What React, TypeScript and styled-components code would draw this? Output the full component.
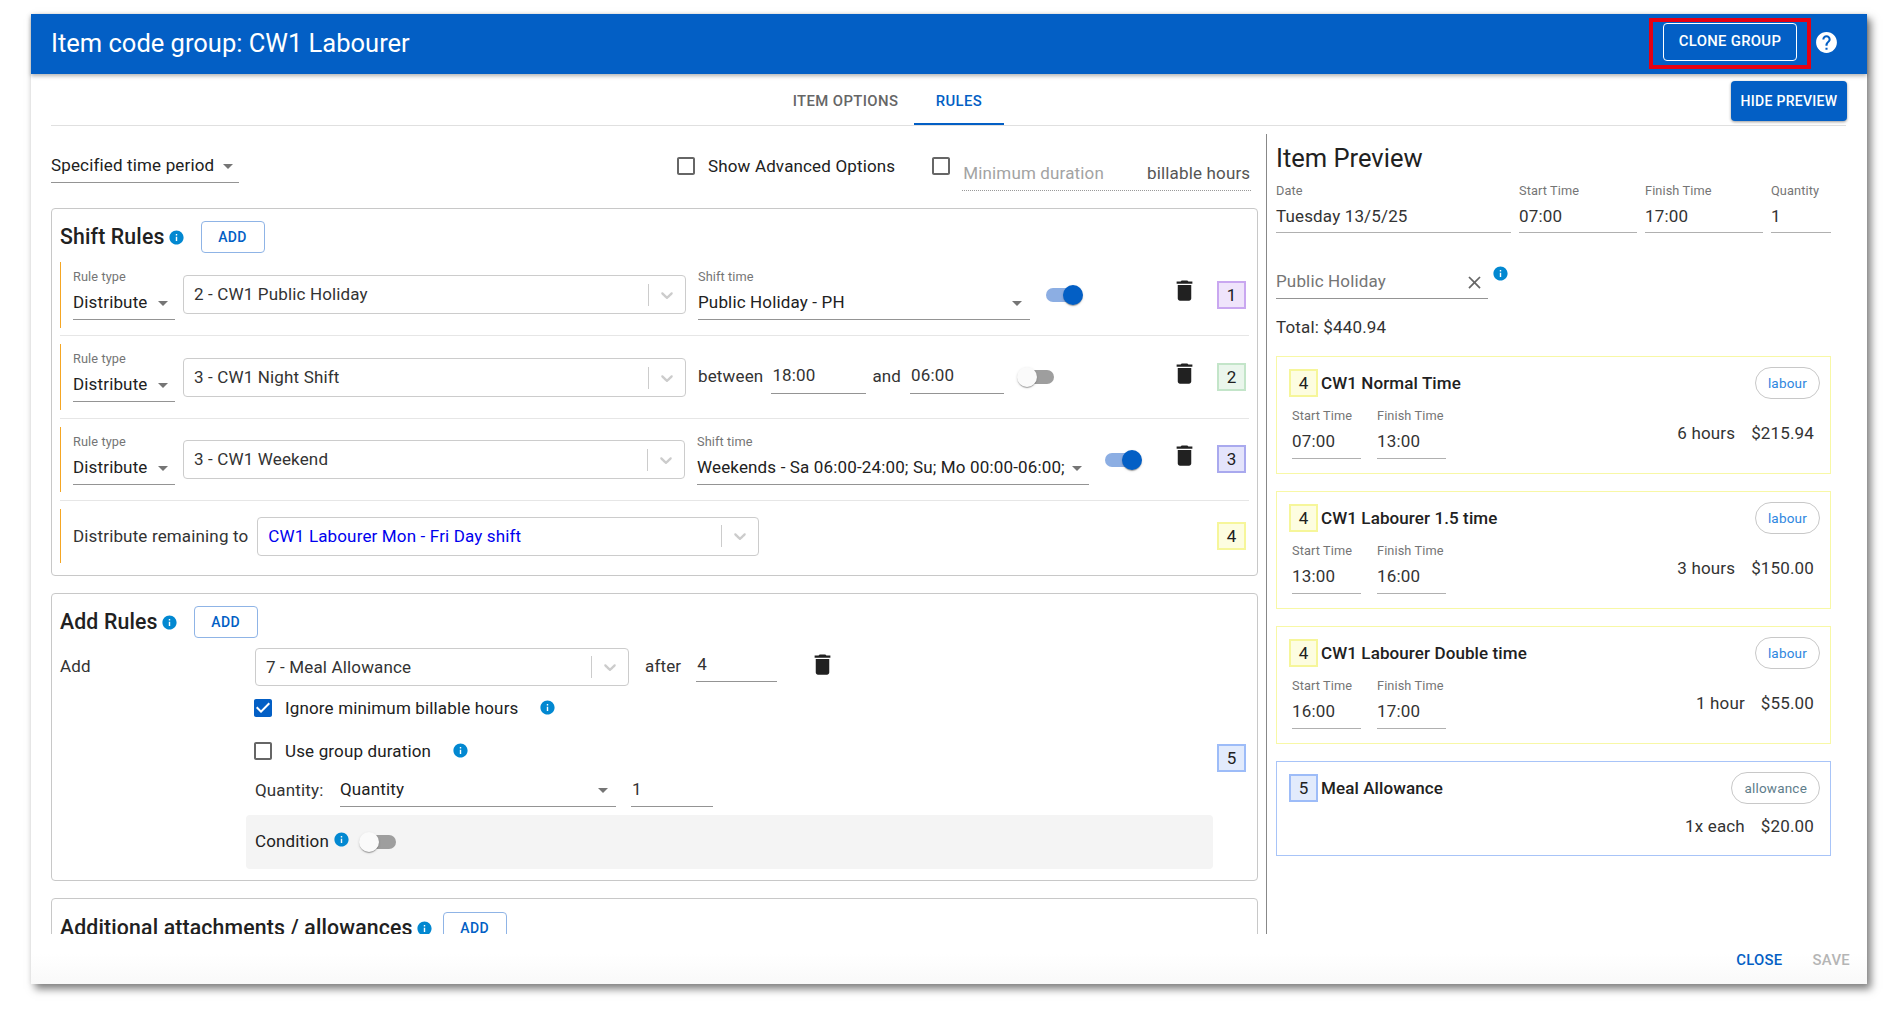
import React from "react";
import styled, { createGlobalStyle } from "styled-components";

const Global = createGlobalStyle`
  html, body { margin: 0; padding: 0; background: #fff; }
  body { font-family: Roboto, "Liberation Sans", sans-serif; color: #212121; font-size: 17px; letter-spacing: .15px; overflow: hidden; }
  * { box-sizing: border-box; }
`;

const BLUE = "#035fc5";

const Spacer = styled.span`
  flex: 1;
`;
const CaretWrap = styled.span`
  display: flex; margin-right: 1px;
`;
const Page = styled.div`
  width: 1902px; height: 1014px; padding: 14px 0 0 31px;
`;
const Dialog = styled.div`
  width: 1836px; height: 970px; background: #fff; display: flex; flex-direction: column;
  box-shadow: 4px 5px 8px rgba(0,0,0,.5), -2px 0 5px rgba(0,0,0,.04);
`;
const Header = styled.header`
  height: 60px; flex: none; background: ${BLUE}; color: #fff; display: flex; align-items: center;
  padding: 0 28px 0 20px; box-shadow: 0 2px 4px rgba(0,0,0,.3); position: relative;
`;
const Title = styled.h1`
  margin: -2px 0 0; font-size: 25.5px; font-weight: 400; line-height: 32px; letter-spacing: 0; flex: 1;
`;
const Annotation = styled.div`
  width: 162px; height: 51px; border: 4px solid #e60012; display: flex; align-items: center; margin-bottom: 2px; padding: 0 0 3px 10px;
`;
const CloneButton = styled.button`
  width: 134px; height: 38px; background: transparent; border: 1px solid #fff; border-radius: 4px; color: #fff;
  font: 500 14.875px Roboto, sans-serif; letter-spacing: .3px; text-transform: uppercase; padding: 0 0 2px;
`;
const HelpIcon = styled.svg`
  width: 25px; height: 25px; fill: #fff; margin: 0 0 3px 3px; display: block;
`;
const TabBar = styled.div`
  height: 52px; flex: none; margin: 0 21px 0 20px; border-bottom: 1px solid #e0e0e0; display: flex; align-items: flex-start; padding-left: 718px;
`;
const Tab = styled.div<{ $active?: boolean; $w: number; $pl?: number }>`
  width: ${p => p.$w}px; height: 51px; display: flex; align-items: center; justify-content: center; padding: 5px 0 0 ${p => p.$pl ?? 0}px;
  font-size: 14.875px; font-weight: 500; letter-spacing: .4px; text-transform: uppercase; white-space: nowrap;
  color: ${p => (p.$active ? BLUE : "#666")};
  border-bottom: 2px solid ${p => (p.$active ? BLUE : "transparent")};
`;
const HidePreview = styled.button`
  margin: 7px -1px 0 auto; width: 116px; height: 40px; border: 0; border-radius: 4px; background: ${BLUE}; color: #fff;
  font: 500 14px Roboto, sans-serif; letter-spacing: .3px; text-transform: uppercase; padding: 0;
  box-shadow: 0 1px 3px rgba(0,0,0,.4);
`;
const Main = styled.div`
  height: 800px; flex: none; margin: 8px 0 0 20px; display: flex; overflow: hidden;
`;
const LeftCol = styled.div`
  width: 1216px; flex: none; height: 800px; border-right: 1px solid #888; overflow: hidden; padding-right: 8px;
`;
const TopBar = styled.div`
  height: 74px; display: flex; align-items: flex-start;
`;
const UnderSelect = styled.div<{ $w: number; $mt?: number; $h?: number; $pb?: number }>`
  width: ${p => p.$w}px; height: ${p => p.$h ?? 35}px; margin-top: ${p => p.$mt ?? 0}px; border-bottom: 1px solid #949494;
  padding-bottom: ${p => p.$pb ?? 0}px;
  display: flex; align-items: center; justify-content: space-between; flex: none; white-space: nowrap;
`;
const Caret = styled.svg`
  width: 24px; height: 24px; fill: #757575; flex: none; margin-top: 2px;
`;
const SelectText = styled.span`
  margin-right: 2px;
`;
const CheckLabel = styled.label<{ $ml?: number; $mt?: number }>`
  display: flex; align-items: center; white-space: nowrap; margin-left: ${p => p.$ml ?? 0}px; margin-top: ${p => p.$mt ?? 0}px; height: 24px;
`;
const BoxIcon = styled.svg<{ $on?: boolean }>`
  width: 24px; height: 24px; margin: 0 10px 0 -3px; fill: ${p => (p.$on ? BLUE : "#666")}; flex: none;
`;
const MinField = styled.div`
  width: 289px; height: 35px; margin-left: -1px; margin-top: 22px; border-bottom: 1px dotted #999;
  display: flex; justify-content: space-between; align-items: center; padding-right: 1px;
`;
const Muted = styled.span`
  color: #a3a3a3; margin-left: 1px;
`;
const Plain = styled.span`
  color: #555; white-space: nowrap;
`;
const Card = styled.section<{ $pt?: number; $pb?: number; $mb?: number }>`
  border: 1px solid #c8c8c8; border-radius: 4px; padding: ${p => p.$pt ?? 12}px 8px ${p => p.$pb ?? 0}px 8px;
  margin-bottom: ${p => p.$mb ?? 17}px;
`;
const CardHead = styled.div`
  display: flex; align-items: center; height: 32px;
`;
const CardTitle = styled.h2`
  margin: 0; font-size: 21.25px; font-weight: 500; line-height: 32px; letter-spacing: .15px; white-space: nowrap; color: #212121;
`;
const Info = styled.svg<{ $ml?: number; $mt?: number }>`
  width: 17px; height: 17px; fill: #0288d1; flex: none; margin-left: ${p => p.$ml ?? 2}px; margin-top: ${p => p.$mt ?? 0}px;
`;
const AddButton = styled.button<{ $ml?: number }>`
  width: 64px; height: 32px; margin-left: ${p => p.$ml ?? 16}px; background: #fff; border: 1px solid #8fb4e6; border-radius: 4px; color: ${BLUE};
  font: 500 14px Roboto, sans-serif; letter-spacing: .4px; padding: 0;
`;
const RuleList = styled.div`
  margin-top: 9px; padding-right: 0;
`;
const RuleSep = styled.div<{ $last?: boolean; $gap?: number }>`
  padding-bottom: ${p => (p.$last ? 12 : p.$gap ?? 7)}px;
  border-bottom: ${p => (p.$last ? "none" : "1px solid #e6e6e6")};
  margin-bottom: ${p => (p.$last ? 0 : 8)}px;
`;
const RuleRow = styled.div<{ $h: number; $center?: boolean }>`
  height: ${p => p.$h}px; border-left: 1px solid #f5a623; padding: 0 3px 0 12px; display: flex;
  align-items: ${p => (p.$center ? "center" : "flex-start")}; gap: 0;
`;
const FieldCol = styled.div<{ $w: number; $ml?: number }>`
  width: ${p => p.$w}px; flex: none; padding-top: 7px; margin-left: ${p => p.$ml ?? 0}px; white-space: nowrap;
`;
const SmallLabel = styled.div`
  font-size: 12.75px; line-height: 16px; color: #757575; letter-spacing: .1px; white-space: nowrap;
`;
const ComboBox = styled.div<{ $w: number; $ml?: number; $mt?: number }>`
  width: ${p => p.$w}px; height: 39px; flex: none; margin-left: ${p => p.$ml ?? 0}px; margin-top: ${p => p.$mt ?? 0}px;
  border: 1px solid #ccc; border-radius: 4px; display: flex; align-items: center; padding: 0 0 0 10px; background: #fff;
`;
const ComboText = styled.span<{ $link?: boolean }>`
  flex: 1; color: ${p => (p.$link ? "#0000ee" : "#333")}; white-space: nowrap; margin-top: -1px;
`;
const ComboSep = styled.span`
  width: 1px; height: 22px; background: #ccc; flex: none;
`;
const Chevron = styled.svg`
  width: 20px; height: 20px; fill: #ccc; margin: 0 8px; flex: none;
`;
const Between = styled.span<{ $ml: number }>`
  margin-left: ${p => p.$ml}px; margin-top: 14px; height: 36px; display: flex; align-items: center; white-space: nowrap; color: #333; flex: none;
`;
const LineInput = styled.div<{ $w: number; $ml: number }>`
  width: ${p => p.$w}px; margin-left: ${p => p.$ml}px; margin-top: 14px; height: 36px; border-bottom: 1px solid #949494; flex: none;
  display: flex; align-items: center; color: #333; padding-left: 1px; padding-bottom: 2px;
`;
const Switch = styled.div<{ $on?: boolean; $mt?: number; $ml?: number }>`
  width: 34px; height: 14px; border-radius: 7px; flex: none; position: relative; margin-left: ${p => p.$ml ?? 16}px; margin-top: ${p => p.$mt ?? 26}px;
  background: ${p => (p.$on ? "#8caee3" : "#9e9e9e")};
  &::after {
    content: ""; position: absolute; width: 20px; height: 20px; border-radius: 50%; top: -3px;
    left: ${p => (p.$on ? "17px" : "-3px")};
    background: ${p => (p.$on ? BLUE : "#fafafa")};
    box-shadow: 0 2px 1px -1px rgba(0,0,0,.2), 0 1px 1px rgba(0,0,0,.14), 0 1px 3px rgba(0,0,0,.12);
  }
`;
const Trash = styled.svg<{ $auto?: boolean; $mt?: number; $ml?: number }>`
  width: 27px; height: 27px; fill: #212121; flex: none; margin-top: ${p => p.$mt ?? 15}px;
  margin-left: ${p => (p.$auto ? "auto" : `${p.$ml ?? 0}px`)};
`;
const NUM: Record<number, [string, string]> = {
  1: ["#efe4fb", "#c9a7f0"], 2: ["#eaf6ec", "#c3e5c9"], 3: ["#e4e4fb", "#a9a9ee"], 4: ["#fdfde0", "#f6f69a"], 5: ["#e2ebfc", "#9dbcf8"],
};
const Num = styled.div<{ $n: number; $ml?: number; $mt?: number; $auto?: boolean }>`
  width: 29px; height: 28px; flex: none; display: flex; align-items: center; justify-content: center; font-size: 17px; color: #212121;
  background: ${p => NUM[p.$n][0]}; border: 2px solid ${p => NUM[p.$n][1]};
  margin-left: ${p => (p.$auto ? "auto" : `${p.$ml ?? 0}px`)}; margin-top: ${p => p.$mt ?? 0}px;
`;
const AddBody = styled.div`
  display: flex; align-items: center; margin-top: 10px; padding-right: 3px;
`;
const AddLabel = styled.div`
  width: 195px; flex: none; align-self: flex-start; line-height: 38px; margin-top: -1px; color: #333;
`;
const AddFields = styled.div`
  width: 950px; flex: none; display: flex; flex-direction: column;
`;
const AddRow = styled.div<{ $h: number; $mt?: number }>`
  display: flex; align-items: flex-start; height: ${p => p.$h}px; margin-top: ${p => p.$mt ?? 0}px; white-space: nowrap;
`;
const AddCombo = styled(ComboBox)`
  height: 38px;
`;
const RowText = styled.span<{ $ml?: number; $w?: number; $lh?: number }>`
  margin-left: ${p => p.$ml ?? 0}px; ${p => (p.$w ? `width:${p.$w}px;` : "")} line-height: ${p => p.$lh ?? 36}px; color: #333; flex: none;
`;
const SmallLine = styled.div<{ $w: number; $ml: number }>`
  width: ${p => p.$w}px; margin-left: ${p => p.$ml}px; height: 34px; border-bottom: 1px solid #949494; flex: none; line-height: 32px; padding-left: 1px; color: #333;
`;
const CheckRow = styled.div<{ $mt: number }>`
  display: flex; align-items: center; height: 19px; margin-top: ${p => p.$mt}px; margin-left: -1px; white-space: nowrap;
`;
const Condition = styled.div`
  margin: 8px 0 0 -9px; width: 967px; height: 54px; background: #f4f4f4; border-radius: 4px; display: flex; align-items: center; padding: 0 0 2px 9px;
`;
const RightCol = styled.div`
  flex: 1; padding-left: 9px; padding-top: 8px; width: 600px;
`;
const PreviewTitle = styled.h2`
  margin: 0; font-size: 25.5px; font-weight: 400; line-height: 32px; color: #212121; letter-spacing: 0;
`;
const PreviewFields = styled.div`
  display: grid; grid-template-columns: 235px 118px 118px 60px; column-gap: 8px; margin-top: 9px;
`;
const Field = styled.div``;
const FieldValue = styled.div`
  height: 34px; border-bottom: 1px solid #b0b0b0; line-height: 34px; color: #333; white-space: nowrap;
`;
const HolidayRow = styled.div`
  display: flex; align-items: flex-start; margin-top: 32px;
`;
const HolidayField = styled.div`
  width: 212px; height: 34px; border-bottom: 1px solid #949494; display: flex; align-items: center; justify-content: space-between; color: #757575; padding-bottom: 2px;
`;
const CloseX = styled.svg`
  width: 21px; height: 21px; fill: #666; margin-right: 3px; margin-top: 3px;
`;
const Total = styled.div`
  line-height: 24px; margin-top: 16px; color: #333;
`;
const Cards = styled.div`
  display: flex; flex-direction: column; gap: 17px; margin-top: 17px; width: 555px;
`;
const ItemCard = styled.div<{ $c: string; $h: number }>`
  height: ${p => p.$h}px; border: 1px solid ${p => p.$c}; padding: 12px 10px 0 12px;
`;
const ItemHead = styled.div`
  display: flex; align-items: center; height: 28px;
`;
const ItemTitle = styled.span`
  font-weight: 500; margin-left: 3px; white-space: nowrap; font-size: 17px; letter-spacing: .1px; margin-top: -1px;
`;
const Chip = styled.span<{ $c: string }>`
  margin-left: auto; height: 32px; border: 1px solid #c8c8c8; border-radius: 16px; padding: 0 12px; display: flex; align-items: center;
  font-size: 13.5px; color: ${p => p.$c}; letter-spacing: .2px;
`;
const TimesRow = styled.div`
  display: flex; align-items: center; margin-top: 11px; padding: 0 6px 0 3px;
`;
const TimeField = styled.div`
  width: 69px; margin-right: 16px;
`;
const TimeValue = styled.div`
  height: 35px; border-bottom: 1px solid #b0b0b0; line-height: 34px; color: #333;
`;
const Amounts = styled.div<{ $mt?: number }>`
  margin-left: auto; display: flex; gap: 16px; color: #333; white-space: nowrap; margin-top: ${p => p.$mt ?? 0}px;
`;
const AmountRow = styled.div`
  display: flex; margin-top: 14px; padding: 0 6px 0 3px;
`;
const Footer = styled.footer`
  flex: 1; display: flex; justify-content: flex-end; align-items: center; padding: 0 17px 0 0; gap: 30px;
  background: linear-gradient(#fff 40%, #f9f9f9);
`;
const FooterBtn = styled.span<{ $off?: boolean }>`
  font-size: 14.875px; font-weight: 500; letter-spacing: .3px; color: ${p => (p.$off ? "#b5b5b5" : BLUE)}; margin-top: 2px;
`;

const infoPath = "M12 2C6.48 2 2 6.48 2 12s4.48 10 10 10 10-4.48 10-10S17.52 2 12 2zm1 15h-2v-6h2v6zm0-8h-2V7h2v2z";
const chevPath = "M4.516 7.548c0.436-0.446 1.043-0.481 1.576 0l3.908 3.747 3.908-3.747c0.533-0.481 1.141-0.446 1.574 0 0.436 0.445 0.408 1.197 0 1.615-0.406 0.418-4.695 4.502-4.695 4.502-0.217 0.223-0.502 0.335-0.787 0.335s-0.57-0.112-0.789-0.335c0 0-4.287-4.084-4.695-4.502s-0.436-1.17 0-1.615z";
const trashPath = "M6 19c0 1.1.9 2 2 2h8c1.1 0 2-.9 2-2V7H6v12zM19 4h-3.5l-1-1h-5l-1 1H5v2h14V4z";
const blank = "M19 5v14H5V5h14m0-2H5c-1.1 0-2 .9-2 2v14c0 1.1.9 2 2 2h14c1.1 0 2-.9 2-2V5c0-1.1-.9-2-2-2z";
const checked = "M19 3H5c-1.11 0-2 .9-2 2v14c0 1.1.89 2 2 2h14c1.11 0 2-.9 2-2V5c0-1.1-.89-2-2-2zm-9 14l-5-5 1.41-1.41L10 14.17l7.59-7.59L19 8l-9 9z";

const InfoI = (p: { $ml?: number; $mt?: number }) => <Info viewBox="0 0 24 24" {...p}><path d={infoPath} /></Info>;
const CaretI = () => <Caret viewBox="0 0 24 24"><path d="M7 10l5 5 5-5z" /></Caret>;
const TrashI = (p: { $auto?: boolean; $mt?: number; $ml?: number }) => <Trash viewBox="0 0 24 24" {...p}><path d={trashPath} /></Trash>;
const Box = ({ on }: { on?: boolean }) => <BoxIcon viewBox="0 0 24 24" $on={on}><path d={on ? checked : blank} /></BoxIcon>;
const Combo = ({ w, text, link, ml, mt }: { w: number; text: string; link?: boolean; ml?: number; mt?: number }) => (
  <ComboBox $w={w} $ml={ml} $mt={mt}>
    <ComboText $link={link}>{text}</ComboText>
    <ComboSep />
    <Chevron viewBox="0 0 20 20"><path d={chevPath} /></Chevron>
  </ComboBox>
);
const RuleType = () => (
  <FieldCol $w={102}>
    <SmallLabel>Rule type</SmallLabel>
    <UnderSelect $w={102}><SelectText>Distribute</SelectText><CaretI /></UnderSelect>
  </FieldCol>
);

type Item = { title: string; start: string; finish: string; hours: string; price: string };
const items: Item[] = [
  { title: "CW1 Normal Time", start: "07:00", finish: "13:00", hours: "6 hours", price: "$215.94" },
  { title: "CW1 Labourer 1.5 time", start: "13:00", finish: "16:00", hours: "3 hours", price: "$150.00" },
  { title: "CW1 Labourer Double time", start: "16:00", finish: "17:00", hours: "1 hour", price: "$55.00" },
];

export default function App() {
  return (
    <Page>
      <Global />
      <Dialog>
        <Header>
          <Title>Item code group: CW1 Labourer</Title>
          <Annotation><CloneButton>Clone Group</CloneButton></Annotation>
          <HelpIcon viewBox="0 0 24 24"><path d="M12 2C6.48 2 2 6.48 2 12s4.48 10 10 10 10-4.48 10-10S17.52 2 12 2zm1 17h-2v-2h2v2zm2.07-7.75l-.9.92C13.45 12.9 13 13.5 13 15h-2v-.5c0-1.1.45-2.1 1.17-2.83l1.24-1.26c.37-.36.59-.86.59-1.41 0-1.1-.9-2-2-2s-2 .9-2 2H8c0-2.21 1.79-4 4-4s4 1.79 4 4c0 .88-.36 1.68-.93 2.25z" /></HelpIcon>
        </Header>
        <TabBar>
          <Tab $w={145} $pl={8}>Item Options</Tab>
          <Tab $w={90} $active>Rules</Tab>
          <HidePreview>Hide Preview</HidePreview>
        </TabBar>
        <Main>
          <LeftCol>
            <TopBar>
              <UnderSelect $w={188} $mt={14}><SelectText>Specified time period</SelectText><Spacer /><CaretI /></UnderSelect>
              <CheckLabel $ml={438} $mt={20}><Box />Show Advanced Options</CheckLabel>
              <CheckLabel $ml={37} $mt={20}><Box /></CheckLabel>
              <MinField><Muted>Minimum duration</Muted><Plain>billable hours</Plain></MinField>
            </TopBar>

            <Card>
              <CardHead>
                <CardTitle>Shift Rules</CardTitle>
                <InfoI $ml={3} />
                <AddButton>ADD</AddButton>
              </CardHead>
              <RuleList>
                <RuleSep>
                  <RuleRow $h={66}>
                    <RuleType />
                    <Combo w={503} ml={8} mt={13} text="2 - CW1 Public Holiday" />
                    <FieldCol $w={332} $ml={12}>
                      <SmallLabel>Shift time</SmallLabel>
                      <UnderSelect $w={332}><span>Public Holiday - PH</span><CaretWrap><CaretI /></CaretWrap></UnderSelect>
                    </FieldCol>
                    <Switch $on />
                    <TrashI $auto />
                    <Num $n={1} $ml={19} $mt={19}>1</Num>
                  </RuleRow>
                </RuleSep>
                <RuleSep $gap={8}>
                  <RuleRow $h={66}>
                    <RuleType />
                    <Combo w={503} ml={8} mt={14} text="3 - CW1 Night Shift" />
                    <Between $ml={12}>between</Between>
                    <LineInput $w={95} $ml={8}>18:00</LineInput>
                    <Between $ml={6}>and</Between>
                    <LineInput $w={94} $ml={9}>06:00</LineInput>
                    <Switch $ml={16} $mt={26} />
                    <TrashI $auto $mt={16} />
                    <Num $n={2} $ml={19} $mt={19}>2</Num>
                  </RuleRow>
                </RuleSep>
                <RuleSep $gap={8}>
                  <RuleRow $h={65}>
                    <RuleType />
                    <Combo w={502} ml={8} mt={13} text="3 - CW1 Weekend" />
                    <FieldCol $w={392} $ml={12}>
                      <SmallLabel>Shift time</SmallLabel>
                      <UnderSelect $w={392}><span>Weekends - Sa 06:00-24:00; Su; Mo 00:00-06:00;</span><CaretWrap><CaretI /></CaretWrap></UnderSelect>
                    </FieldCol>
                    <Switch $on />
                    <TrashI $auto />
                    <Num $n={3} $ml={19} $mt={18}>3</Num>
                  </RuleRow>
                </RuleSep>
                <RuleSep $last>
                  <RuleRow $h={54} $center>
                    <RowText>Distribute remaining to</RowText>
                    <Combo w={502} ml={9} text="CW1 Labourer Mon - Fri Day shift" link />
                    <Num $n={4} $auto>4</Num>
                  </RuleRow>
                </RuleSep>
              </RuleList>
            </Card>

            <Card $pb={11}>
              <CardHead>
                <CardTitle>Add Rules</CardTitle>
                <InfoI $ml={3} />
                <AddButton>ADD</AddButton>
              </CardHead>
              <AddBody>
                <AddLabel>Add</AddLabel>
                <AddFields>
                  <AddRow $h={38}>
                    <AddCombo $w={374}>
                      <ComboText>7 - Meal Allowance</ComboText>
                      <ComboSep />
                      <Chevron viewBox="0 0 20 20"><path d={chevPath} /></Chevron>
                    </AddCombo>
                    <RowText $ml={16}>after</RowText>
                    <SmallLine $w={81} $ml={15}>4</SmallLine>
                    <TrashI $ml={32} $mt={3} />
                  </AddRow>
                  <CheckRow $mt={12}><Box on />Ignore minimum billable hours<InfoI $ml={21} /></CheckRow>
                  <CheckRow $mt={24}><Box />Use group duration<InfoI $ml={21} /></CheckRow>
                  <AddRow $h={34} $mt={13}>
                    <RowText $w={85} $lh={34}>Quantity:</RowText>
                    <UnderSelect $w={276} $h={34} $pb={2}><span>Quantity</span><CaretWrap><CaretI /></CaretWrap></UnderSelect>
                    <SmallLine $w={82} $ml={15}>1</SmallLine>
                  </AddRow>
                  <Condition>
                    <span>Condition</span>
                    <InfoI $ml={4} $mt={-4} />
                    <Switch $ml={12} $mt={2} />
                  </Condition>
                </AddFields>
                <Num $n={5} $ml={12} $mt={-2}>5</Num>
              </AddBody>
            </Card>

            <Card $pt={13}>
              <CardHead>
                <CardTitle>Additional attachments / allowances</CardTitle>
                <InfoI $ml={3} />
                <AddButton $ml={10}>ADD</AddButton>
              </CardHead>
            </Card>
          </LeftCol>

          <RightCol>
            <PreviewTitle>Item Preview</PreviewTitle>
            <PreviewFields>
              <Field><SmallLabel>Date</SmallLabel><FieldValue>Tuesday 13/5/25</FieldValue></Field>
              <Field><SmallLabel>Start Time</SmallLabel><FieldValue>07:00</FieldValue></Field>
              <Field><SmallLabel>Finish Time</SmallLabel><FieldValue>17:00</FieldValue></Field>
              <Field><SmallLabel>Quantity</SmallLabel><FieldValue>1</FieldValue></Field>
            </PreviewFields>
            <HolidayRow>
              <HolidayField>
                <span>Public Holiday</span>
                <CloseX viewBox="0 0 24 24"><path d="M19 6.41L17.59 5 12 10.59 6.41 5 5 6.41 10.59 12 5 17.59 6.41 19 12 13.41 17.59 19 19 17.59 13.41 12z" /></CloseX>
              </HolidayField>
              <InfoI $ml={4} $mt={0} />
            </HolidayRow>
            <Total>Total: $440.94</Total>
            <Cards>
              {items.map(it => (
                <ItemCard key={it.title} $c="#f8f8a6" $h={118}>
                  <ItemHead>
                    <Num $n={4}>4</Num>
                    <ItemTitle>{it.title}</ItemTitle>
                    <Chip $c="#2e86e0">labour</Chip>
                  </ItemHead>
                  <TimesRow>
                    <TimeField><SmallLabel>Start Time</SmallLabel><TimeValue>{it.start}</TimeValue></TimeField>
                    <TimeField><SmallLabel>Finish Time</SmallLabel><TimeValue>{it.finish}</TimeValue></TimeField>
                    <Amounts $mt={-2}><span>{it.hours}</span><span>{it.price}</span></Amounts>
                  </TimesRow>
                </ItemCard>
              ))}
              <ItemCard $c="#a8c4f8" $h={95}>
                <ItemHead>
                  <Num $n={5}>5</Num>
                  <ItemTitle>Meal Allowance</ItemTitle>
                  <Chip $c="#607d8b">allowance</Chip>
                </ItemHead>
                <AmountRow>
                  <Amounts><span>1x each</span><span>$20.00</span></Amounts>
                </AmountRow>
              </ItemCard>
            </Cards>
          </RightCol>
        </Main>
        <Footer>
          <FooterBtn>CLOSE</FooterBtn>
          <FooterBtn $off>SAVE</FooterBtn>
        </Footer>
      </Dialog>
    </Page>
  );
}
